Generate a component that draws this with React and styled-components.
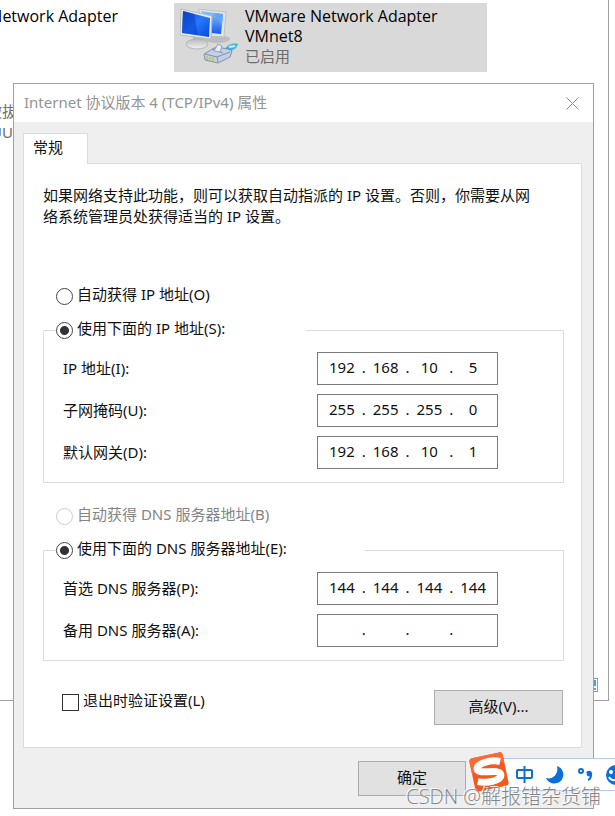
import React from "react";
import styled, { createGlobalStyle } from "styled-components";

const ipRows = [
  { id: "ip", label: "IP 地址(I):", value: ["192", "168", "10", "5"] },
  { id: "mask", label: "子网掩码(U):", value: ["255", "255", "255", "0"] },
  { id: "gateway", label: "默认网关(D):", value: ["192", "168", "10", "1"] },
];

const dnsRows = [
  { id: "dns1", label: "首选 DNS 服务器(P):", value: ["144", "144", "144", "144"] },
  { id: "dns2", label: "备用 DNS 服务器(A):", value: ["", "", "", ""] },
];

const AdapterIcon = () => (
  <svg width="60" height="58" viewBox="0 0 60 58" aria-hidden="true">
    <defs>
      <linearGradient id="screen" x1="0" y1="0" x2="1" y2="1">
        <stop offset="0" stopColor="#0a45c8" />
        <stop offset="0.5" stopColor="#2479ff" />
        <stop offset="1" stopColor="#0846da" />
      </linearGradient>
      <linearGradient id="screenBack" x1="0" y1="0" x2="0" y2="1">
        <stop offset="0" stopColor="#8fc4fa" />
        <stop offset="1" stopColor="#1259ee" />
      </linearGradient>
      <linearGradient id="stand" x1="0" y1="0" x2="0" y2="1">
        <stop offset="0" stopColor="#b7bbbd" />
        <stop offset="1" stopColor="#f1f2f2" />
      </linearGradient>
    </defs>
    <ellipse cx="37" cy="31" rx="13" ry="4" fill="#bdbdbd" />
    <path d="M18 1L46 4L44 29L30 28Z" fill="#e3e5e5" stroke="#bfc2c3" />
    <path d="M21 3L43 6L41 26L31 25Z" fill="url(#screenBack)" />
    <path d="M34 5L43 6L42 18Z" fill="#5ea5fa" />
    <path d="M13 29H24V36H13Z" fill="#b3b6b8" />
    <ellipse cx="17" cy="36" rx="11" ry="5" fill="url(#stand)" stroke="#b3b6b8" />
    <path d="M1 1L32 8L31 31L0 27Z" fill="#e9ebeb" stroke="#b9bcbe" />
    <path d="M3 3L30 10L29 29L2 25Z" fill="url(#screen)" />
    <path d="M3 3L14 6L18 27L2 25Z" fill="#0b43cc" opacity="0.6" />
    <path d="M45 41C48 36 53 35 58 36L56 40C52 43 49 43 46 44Z" fill="#39b2dc" stroke="#79cbe4" />
    <path d="M49 39L55 38" stroke="#c9f0fa" strokeWidth="2" />
    <path d="M24 46L36 39L48 41L52 43L50 49L38 55L25 52Z" fill="#c3cfe3" stroke="#8090b0" />
    <path d="M25 46L37 49L50 44M37 49L38 54M32 41L43 45" fill="none" stroke="#8090b0" />
    <path d="M34 43L38 36L42 38L40 44Z" fill="#e8eef8" stroke="#8f9fbc" />
    <path d="M27 48V52M30 49V53M33 49V53" stroke="#c3c56a" strokeWidth="2" />
  </svg>
);

const SogouLogo = () => (
  <svg width="40" height="40" viewBox="0 0 40 40" aria-hidden="true">
    <g transform="rotate(-12 20 20)">
      <rect x="3" y="3" width="34" height="34" rx="3" fill="#f4581d" />
      <path d="M3 6Q3 3 6 3H34Q37 3 37 6V14Q20 9 3 19Z" fill="#f96a38" />
      <path
        d="M33 12C24 8 9 9 9 15C9 21 31 18 31 25C31 31 16 31 7 27"
        fill="none"
        stroke="#fff"
        strokeWidth="7"
      />
    </g>
  </svg>
);

const IpField = ({ id, label, value }) => (
  <>
    <FieldLabel htmlFor={`${id}-0`}>{label}</FieldLabel>
    <IpBox>
      {value.map((part, i) => (
        <React.Fragment key={i}>
          {i > 0 && <Dot>.</Dot>}
          <Octet
            id={`${id}-${i}`}
            aria-label={i > 0 ? `${label} ${i + 1}` : undefined}
            maxLength={3}
            defaultValue={part}
          />
        </React.Fragment>
      ))}
    </IpBox>
  </>
);

const App = () => {
  return (
    <Desktop lang="zh-CN">
      <GlobalStyle />
      <Explorer>
        <Tiles>
          <ClippedText $width="118px">Network Adapter</ClippedText>
          <Tile>
            <AdapterIcon />
            <div>
              <p>
                VMware Network Adapter
                <br />
                VMnet8
              </p>
              <TileStatus>已启用</TileStatus>
            </div>
          </Tile>
        </Tiles>
        <Behind>
          <ClippedText $width="32px">被拔出</ClippedText>
          <ClippedText $width="13px">UU</ClippedText>
        </Behind>
        <StatusBar>
          <ViewIcon />
        </StatusBar>
      </Explorer>

      <Dialog role="dialog" aria-labelledby="dialog-title">
        <TitleBar>
          <h1 id="dialog-title">Internet 协议版本 4 (TCP/IPv4) 属性</h1>
          <CloseButton aria-label="关闭">
            <svg width="13" height="13" viewBox="0 0 13 13">
              <path d="M0.5 0.5L12.5 12.5M12.5 0.5L0.5 12.5" stroke="#8a8a8a" />
            </svg>
          </CloseButton>
        </TitleBar>
        <Body>
          <Tab role="tab" aria-selected="true">
            常规
          </Tab>
          <Panel role="tabpanel">
            <Description>
              如果网络支持此功能，则可以获取自动指派的 IP 设置。否则，你需要从网络系统管理员处获得适当的 IP 设置。
            </Description>

            <AutoOption $top="59px">
              <Radio name="ip-mode" />
              <span>自动获得 IP 地址(O)</span>
            </AutoOption>
            <Group>
              <Legend $width="250px">
                <Option>
                  <Radio name="ip-mode" defaultChecked />
                  <span>使用下面的 IP 地址(S):</span>
                </Option>
              </Legend>
              <Fields>
                {ipRows.map((row) => (
                  <IpField key={row.id} {...row} />
                ))}
              </Fields>
            </Group>

            <AutoOption $top="23px" $disabled>
              <Radio name="dns-mode" disabled />
              <span>自动获得 DNS 服务器地址(B)</span>
            </AutoOption>
            <Group>
              <Legend $width="309px">
                <Option>
                  <Radio name="dns-mode" defaultChecked />
                  <span>使用下面的 DNS 服务器地址(E):</span>
                </Option>
              </Legend>
              <Fields>
                {dnsRows.map((row) => (
                  <IpField key={row.id} {...row} />
                ))}
              </Fields>
            </Group>

            <PanelFooter>
              <Option>
                <Checkbox />
                <span>退出时验证设置(L)</span>
              </Option>
              <Button $width="129px">高级(V)...</Button>
            </PanelFooter>
          </Panel>
          <DialogFooter>
            <Button $width="108px">确定</Button>
          </DialogFooter>
        </Body>
      </Dialog>

      <ImeBar>
        <SogouLogo />
        <svg width="106" height="24" viewBox="0 0 106 24" fill="none" stroke="#0a6fd6">
          <rect x="8" y="7" width="15" height="8" rx="1" strokeWidth="2" />
          <path d="M15.5 3V20" strokeWidth="2" />
          <path
            d="M48 3A9 9 0 1 1 37 15C44 17 50 11 48 3Z"
            fill="#0a6fd6"
            stroke="none"
          />
          <circle cx="72" cy="8" r="2" strokeWidth="2" />
          <path d="M78 10A2 2 0 1 1 82 12Q82 16 79 17" strokeWidth="2" />
          <circle cx="80" cy="11" r="2" fill="#0a6fd6" />
          <circle cx="107" cy="12" r="10" fill="#0a6fd6" stroke="none" />
          <circle cx="102" cy="9" r="2" fill="#fff" stroke="none" />
          <path d="M100 14Q102 18 108 17" stroke="#fff" strokeWidth="2" />
        </svg>
      </ImeBar>
      <Watermark>CSDN @解报错杂货铺</Watermark>
    </Desktop>
  );
};

export default App;

const GlobalStyle = createGlobalStyle`
  * {
    box-sizing: border-box;
  }

  body {
    margin: 0;
    background: #fff;
    color: #111;
    font-family: "Noto Sans", "Noto Sans CJK SC", sans-serif;
    font-size: 15px;
    line-height: 20px;
  }

  h1, p {
    margin: 0;
    font-size: inherit;
    font-weight: normal;
  }

  input, button {
    font: inherit;
    color: inherit;
    margin: 0;
    padding: 0;
  }
`;

const Desktop = styled.div`
  position: relative;
  min-height: 100vh;
  overflow: hidden;
`;

const Explorer = styled.div`
  display: flex;
  flex-direction: column;
  min-height: 701px;
  margin-right: 6px;
  padding-top: 3px;
  border: solid #a0a0a0;
  border-width: 0 1px 1px 0;
`;

const Tiles = styled.div`
  display: flex;
  gap: 56px;
  color: #000;
  font-family: "Open Sans", "Noto Sans CJK SC", sans-serif;
  font-size: 16px;
`;

const Tile = styled.div`
  display: flex;
  flex: 0 1 313px;
  gap: 5px;
  height: 69px;
  padding: 3px 6px;
  background: #d9d9d9;

  svg {
    margin-top: 2px;
  }
`;

const TileStatus = styled.p`
  color: #6d6d6d;
  font-size: 15px;
`;

/* keeps the end of the text and cuts its beginning at the window edge */
const ClippedText = styled.div`
  display: flex;
  justify-content: flex-end;
  width: ${(props) => props.$width};
  padding-top: 3px;
  overflow: hidden;
  white-space: nowrap;
`;

const Behind = styled.div`
  margin-top: 28px;
  color: #6d6d6d;

  > div {
    padding-top: 1px;
  }
`;

const StatusBar = styled.div`
  display: flex;
  justify-content: flex-end;
  margin-top: auto;
  padding: 0 10px 8px;
`;

const ViewIcon = styled.span`
  width: 18px;
  height: 14px;
  border: 1px solid #999;
  background: linear-gradient(#4f97ea 0 60%, #fff 60% 75%, #7c9dc0 75%);
  background-clip: content-box;
  padding: 1px;
`;

const Dialog = styled.div`
  position: absolute;
  top: 83px;
  left: 13px;
  right: 21px;
  border: 1px solid #a0a0a0;
  background: #efefef;
`;

const TitleBar = styled.div`
  display: flex;
  align-items: center;
  justify-content: space-between;
  height: 38px;
  padding: 0 14px 0 10px;
  background: #fff;
  color: #949494;

  h1 {
    padding-bottom: 2px;
  }
`;

const CloseButton = styled.button`
  display: flex;
  border: none;
  background: none;
`;

const Body = styled.div`
  padding: 11px 11px 12px 9px;
`;

const Tab = styled.button`
  display: block;
  position: relative;
  z-index: 1;
  width: 65px;
  height: 31px;
  margin-bottom: -1px;
  padding: 0 15px 4px 0;
  border: 1px solid #dcdcdc;
  border-bottom: none;
  background: #fff;
`;

const Panel = styled.div`
  padding: 21px 17px 22px 19px;
  border: 1px solid #dcdcdc;
  background: #fff;
`;

const Description = styled.p`
  max-width: 494px;
  line-height: 21px;
`;

const Option = styled.label`
  display: flex;
  align-items: center;
  gap: 4px;
  height: 20px;

  span {
    padding-bottom: 5px;
  }
`;

const AutoOption = styled(Option)`
  margin: ${(props) => props.$top} 0 14px 13px;
  color: ${(props) => (props.$disabled ? "#858585" : "inherit")};
`;

const Radio = styled.input.attrs({ type: "radio" })`
  appearance: none;
  width: 17px;
  height: 17px;
  border: 1px solid #444;
  border-radius: 50%;
  background: #fff;

  &:checked {
    background: radial-gradient(#333 0 4px, #fff 5px);
  }

  &:disabled {
    border-color: #ccc;
  }
`;

const Checkbox = styled.input.attrs({ type: "checkbox" })`
  appearance: none;
  width: 17px;
  height: 17px;
  border: 1px solid #333;
  background: #fff;

  &:checked {
    background: #333;
  }
`;

const Group = styled.fieldset`
  min-width: 0;
  margin: 0;
  padding: 0 65px 13px 12px;
  border: 1px solid #dcdcdc;
`;

const Legend = styled.legend`
  width: ${(props) => props.$width};
  padding: 0;
`;

const Fields = styled.div`
  display: grid;
  grid-template-columns: 1fr 181px;
  gap: 9px;
  align-items: center;
  padding: 12px 0 0 7px;
`;

const FieldLabel = styled.label`
  padding-bottom: 2px;
`;

const IpBox = styled.div`
  display: flex;
  align-items: center;
  height: 33px;
  padding: 0 6px 4px;
  border: 1px solid #7a7a7a;
  background: #fff;
`;

const Octet = styled.input`
  flex: 1;
  min-width: 0;
  border: none;
  outline: none;
  background: none;
  text-align: center;
`;

const Dot = styled.span`
  width: 8px;
  text-align: center;
`;

const PanelFooter = styled.div`
  display: flex;
  justify-content: space-between;
  margin-top: 29px;
  padding: 0 1px 0 19px;

  label {
    margin-top: 2px;
  }
`;

const Button = styled.button`
  width: ${(props) => props.$width};
  height: 35px;
  padding-bottom: 3px;
  border: 1px solid #adadad;
  background: #e1e1e1;
`;

const DialogFooter = styled.div`
  display: flex;
  justify-content: flex-end;
  padding: 13px 116px 0 0;
`;

/* input method bar floating over the dialog, cut by the screen edge */
const ImeBar = styled.div`
  position: absolute;
  top: 758px;
  right: -1px;
  display: flex;
  align-items: center;
  width: 136px;
  height: 33px;
  border: 1px solid #b3cbe8;
  background: #fff;

  svg {
    flex: none;
  }

  svg:first-child {
    margin: -6px 0 0 -12px;
  }
`;

const Watermark = styled.div`
  position: absolute;
  top: 785px;
  right: 14px;
  color: #858585;
  font-family: "Open Sans", "Noto Sans CJK SC", sans-serif;
  font-size: 20px;
  font-weight: 300;
  line-height: 24px;
  text-shadow: -1px -1px 0 #fff;
`;
